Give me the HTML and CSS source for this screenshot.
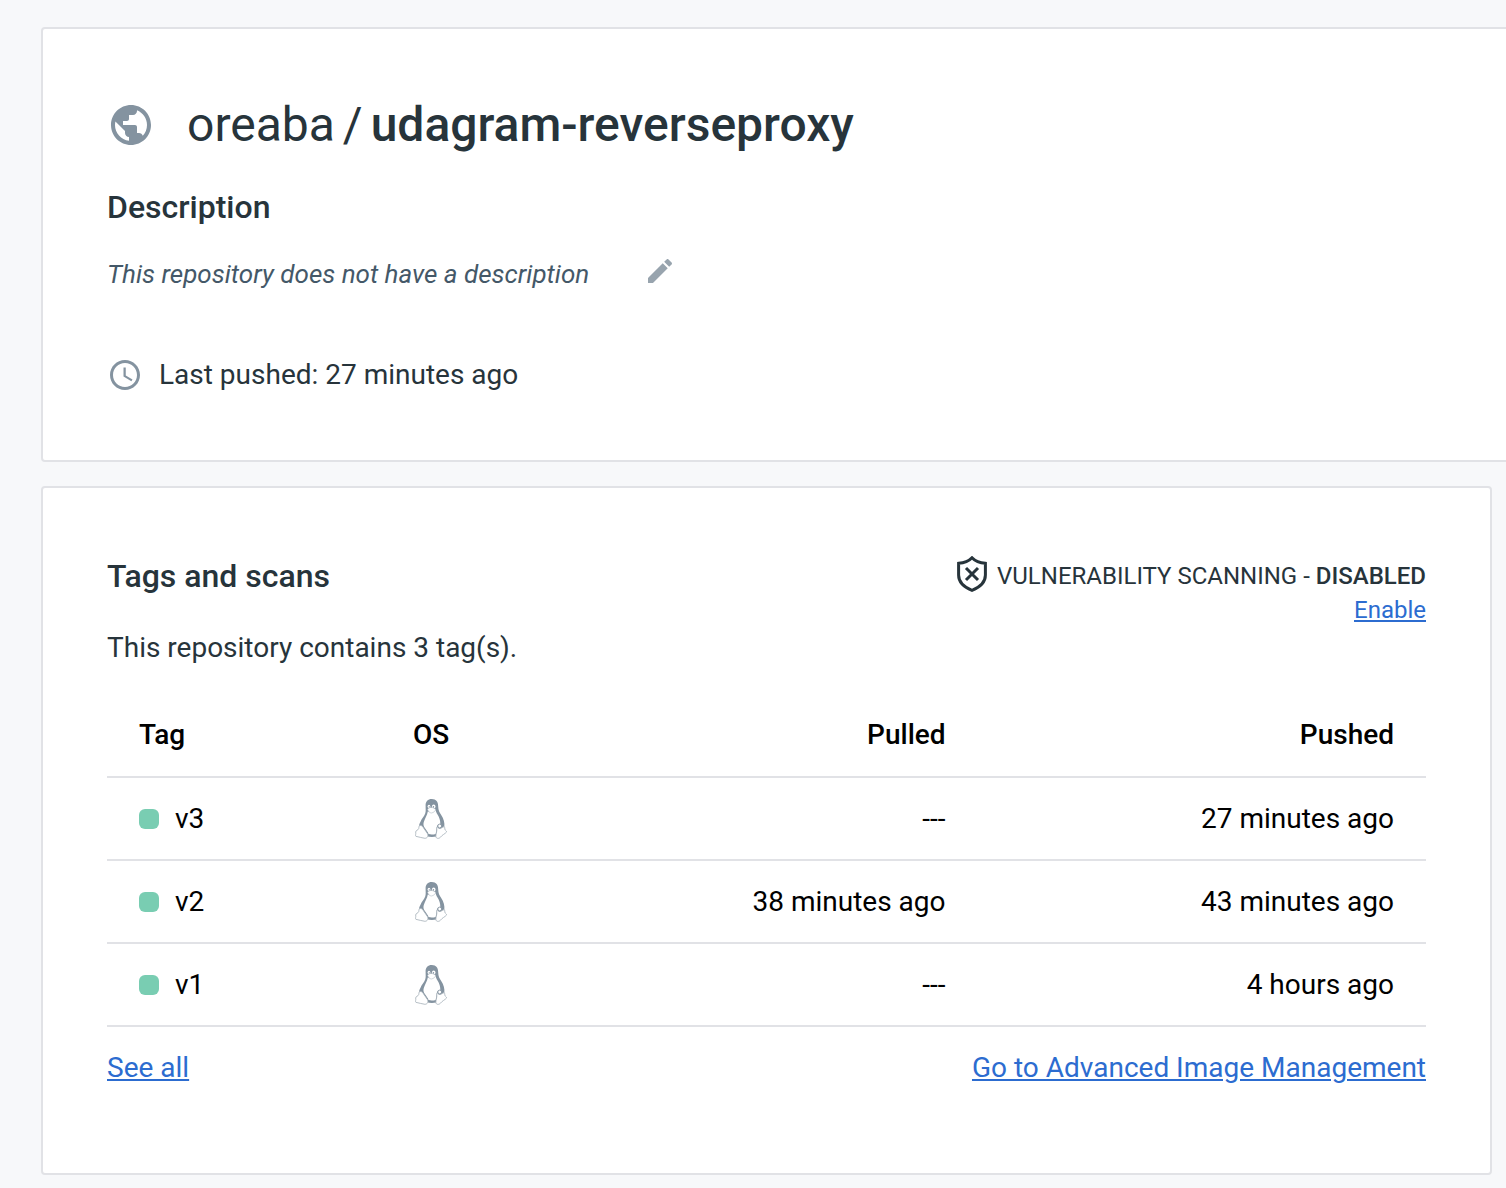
FILE: index.html
```html
<!DOCTYPE html>
<html lang="en">
<head>
<meta charset="utf-8">
<title>oreaba / udagram-reverseproxy</title>
<meta name="viewport" content="width=device-width, initial-scale=1">
<link rel="stylesheet" href="styles.css">
</head>
<body>
<svg class="sprite" aria-hidden="true">
  <symbol id="tux" viewBox="0 0 32 40">
    <path fill="#8493a0" d="M16.800.1C12.800.1 10.600 2.600 10.600 6.500c0 3.500.4 5.500-.4 8C9.100 17.500 6.400 19.800 5.400 23c-.7 1.500-1.500 2.300-1.100 4.500l7.500 9.800c3 .8 6.500.8 9.500.2l8-9.500c.6-4.500-.7-8.300-3.100-12-1.800-2.900-2.900-4.500-3-8.500C23.200 3 21.200.1 16.800.1z"/>
    <path fill="#fff" d="M12.800 12.500c-.5 3.500-3 7-4 10.500-.5 1.800-.5 3.500.4 5l3.600 5.200c.8 1.200.5 1.600.7 1.900 2.300.7 4.800.6 7.200-.2l1.200-7.400c.5-1.800 2-2.400 3.400-1.900.2-4-.9-7-2.800-10-1.200-2-1.500-3.200-2.300-5.200l-3.700 2.500z"/>
    <ellipse cx="14" cy="7.600" rx="1.400" ry="1.800" fill="#fff"/>
    <ellipse cx="18.700" cy="7.600" rx="1.800" ry="2" fill="#fff"/>
    <circle cx="14.300" cy="7.900" r=".7" fill="#8493a0"/>
    <circle cx="18.400" cy="7.900" r=".8" fill="#8493a0"/>
    <path fill="#fff" stroke="#a3afb8" stroke-width=".5" d="M12.500 10.200c1-1 2.200-1.700 3.700-1.700 1.600 0 2.800.8 4.300 1.500.3 2-1.900 3.700-4.200 4-1.800 0-3.200-2-3.800-3.800z"/>
    <path fill="#fff" stroke="#a3afb8" stroke-width=".8" stroke-linejoin="round" d="M4.500 26.800c1.300-.6 2.400-.2 3.300 1l4.600 6.700c1.300 2.200.2 4.700-2.500 4.800-3.200-.3-5.900-1.500-9-2-.9-.7.2-2.500-.2-4.300.1-2 2.400-1.600 3-3.300.3-1.100 0-2.200.8-2.900zM22.500 27.500c.5 1.800 1.600 2.300 3.200 1.800 1.600-.4 2.200-1.500 3.500-1.700.8.600.3 2.400 1 3.400.6.700 1.600 1.200 1.400 2-1.900 2.100-4.500 2.900-6.100 5.200-1.500 1.600-4.400 1.700-4.600-.7-.2-2 .8-4 .9-6.200 0-1.400-.2-3 .7-3.800z"/>
    <circle cx="24.700" cy="27" r="1.900" fill="#fff" stroke="#8493a0" stroke-width=".9"/>
  </symbol>
</svg>

<main class="page">
  <section class="card card-wide">
    <h1 class="repo-name">
      <svg class="icon-globe" viewBox="0 0 24 24" aria-hidden="true"><path d="M12 2C6.480 2 2 6.480 2 12s4.480 10 10 10 10-4.480 10-10S17.520 2 12 2zm-1 17.930c-3.950-.49-7-3.850-7-7.930 0-.62.080-1.210.21-1.790L9 15v1c0 1.100.9 2 2 2v1.930zm6.900-2.540c-.26-.81-1-1.390-1.900-1.390h-1v-3c0-.55-.45-1-1-1H8v-2h2c.55 0 1-.45 1-1V7h2c1.100 0 2-.9 2-2v-.41c2.930 1.190 5 4.060 5 7.410 0 2.080-.8 3.970-2.100 5.390z"/></svg>
      <span class="repo-path"><span>oreaba</span> <span>/</span> <strong>udagram-reverseproxy</strong></span>
    </h1>
    <h2 class="heading">Description</h2>
    <div class="description">
      <em>This repository does not have a description</em>
      <button class="edit-button" type="button" aria-label="Edit description">
        <svg viewBox="0 0 24 24" aria-hidden="true"><path d="M3 17.250V21h3.750L17.810 9.940l-3.750-3.750L3 17.250zM20.710 7.040c.39-.39.39-1.020 0-1.410l-2.340-2.340c-.39-.39-1.020-.39-1.410 0l-1.830 1.830 3.750 3.750 1.830-1.830z"/></svg>
      </button>
    </div>
    <p class="last-pushed">
      <svg class="icon-clock" viewBox="0 0 24 24" aria-hidden="true"><path d="M11.990 2C6.470 2 2 6.480 2 12s4.470 10 9.990 10C17.520 22 22 17.520 22 12S17.520 2 11.990 2zM12 20c-4.420 0-8-3.580-8-8s3.580-8 8-8 8 3.580 8 8-3.580 8-8 8zM12.500 7H11v6l5.250 3.150.75-1.230-4.500-2.670z"/></svg>
      <span>Last pushed: 27 minutes ago</span>
    </p>
  </section>

  <section class="card card-tags">
    <header class="tags-header">
      <div>
        <h2 class="heading">Tags and scans</h2>
        <p class="tag-count">This repository contains 3 tag(s).</p>
      </div>
      <div class="scanning">
        <p class="scan-status">
          <svg class="icon-shield" viewBox="0 0 30 36" aria-hidden="true"><path d="M15 1.800C12 5 7 7 1.600 7.300V19c0 7 5 12 13.400 15.300C23.400 31 28.400 26 28.400 19V7.300C23 7 18 5 15 1.800zM9 12l12 12M21 12l-12 12"/></svg>
          <span>VULNERABILITY SCANNING - <strong>DISABLED</strong></span>
        </p>
        <a class="link" href="#enable">Enable</a>
      </div>
    </header>

    <table class="tags">
      <thead>
        <tr><th class="col-tag">Tag</th><th class="col-os">OS</th><th class="col-pulled">Pulled</th><th class="col-pushed">Pushed</th></tr>
      </thead>
      <tbody>
        <tr>
          <td><span class="tag"><i class="dot"></i>v3</span></td>
          <td class="col-os"><svg class="icon-tux" role="img" aria-label="Linux"><use href="#tux"/></svg></td>
          <td class="col-pulled">---</td>
          <td class="col-pushed">27 minutes ago</td>
        </tr>
        <tr>
          <td><span class="tag"><i class="dot"></i>v2</span></td>
          <td class="col-os"><svg class="icon-tux" role="img" aria-label="Linux"><use href="#tux"/></svg></td>
          <td class="col-pulled">38 minutes ago</td>
          <td class="col-pushed">43 minutes ago</td>
        </tr>
        <tr>
          <td><span class="tag"><i class="dot"></i>v1</span></td>
          <td class="col-os"><svg class="icon-tux" role="img" aria-label="Linux"><use href="#tux"/></svg></td>
          <td class="col-pulled">---</td>
          <td class="col-pushed">4 hours ago</td>
        </tr>
      </tbody>
    </table>

    <footer class="tags-footer">
      <a class="link" href="#tags">See all</a>
      <a class="link" href="#image-management">Go to Advanced Image Management</a>
    </footer>
  </section>
</main>
</body>
</html>
```

FILE: styles.css
```css
* {
  box-sizing: border-box;
}

body {
  margin: 0;
  background: #f7f8fa;
  color: #27343b;
  font-family: Roboto, "Liberation Sans", sans-serif;
  font-size: 28px;
  line-height: 36px;
  overflow-x: hidden;
}

h1, h2, p {
  margin: 0;
}

svg {
  display: block;
  flex: none;
}

strong {
  font-weight: 500;
}

.sprite {
  position: absolute;
  width: 0;
  height: 0;
}

.page {
  display: flex;
  flex-direction: column;
  gap: 24px;
  padding: 27px 14px 14px 41px;
}

.card {
  padding: 64px;
  background: #fff;
  border: 2px solid #e1e2e6;
  border-radius: 4px;
}

.card-wide {
  margin-right: -20px;
  padding-bottom: 67px;
}

.repo-name {
  display: flex;
  align-items: center;
  gap: 32px;
  font-size: 48px;
  font-weight: 400;
  line-height: 64px;
}

.repo-path {
  display: flex;
  gap: 8px;
}

.icon-globe {
  width: 48px;
  height: 48px;
  fill: #8493a0;
}

.heading {
  font-size: 32px;
  font-weight: 500;
  line-height: 40px;
}

.card-wide .heading {
  margin-top: 30px;
}

.description {
  display: flex;
  align-items: flex-start;
  gap: 55px;
  margin-top: 28px;
  color: #445868;
  font-size: 26px;
  line-height: 38px;
}

.edit-button {
  padding: 0;
  border: 0;
  background: none;
  cursor: pointer;
}

.edit-button svg {
  width: 32px;
  height: 32px;
  fill: #98a4ae;
}

.last-pushed {
  display: flex;
  align-items: center;
  gap: 16px;
  margin-top: 64px;
}

.icon-clock {
  width: 36px;
  height: 36px;
  fill: #8493a0;
}

.tags-header {
  display: flex;
  justify-content: space-between;
  padding-top: 4px;
}

.tag-count {
  margin-top: 34px;
}

.scanning {
  display: flex;
  flex-direction: column;
  align-items: flex-end;
  font-size: 24px;
}

.scan-status {
  display: flex;
  align-items: flex-end;
  gap: 10px;
  line-height: 32px;
}

.icon-shield {
  width: 30px;
  height: 36px;
  fill: none;
  stroke: #27343b;
  stroke-width: 3;
}

.link {
  color: #2c6cd0;
  text-decoration: underline;
}

.tags {
  width: 100%;
  margin-top: 28px;
  border-collapse: collapse;
  table-layout: fixed;
  color: #000;
}

.tags th,
.tags td {
  height: 83px;
  padding: 0 32px;
  border-bottom: 2px solid #e1e2e6;
  text-align: left;
}

.tags th {
  font-weight: 500;
}

.tags .col-tag {
  width: 251px;
}

.tags .col-os {
  width: 146px;
  text-align: center;
}

.tags .col-pulled,
.tags .col-pushed {
  text-align: right;
}

.tags .col-pushed {
  width: 34%;
}

.tag {
  display: flex;
  align-items: center;
  gap: 16px;
}

.dot {
  width: 20px;
  height: 20px;
  border-radius: 6px;
  background: #79cdb2;
}

.icon-tux {
  width: 32px;
  height: 40px;
  margin: 0 auto;
}

.tags-footer {
  display: flex;
  justify-content: space-between;
  padding: 23px 0;
}
```
